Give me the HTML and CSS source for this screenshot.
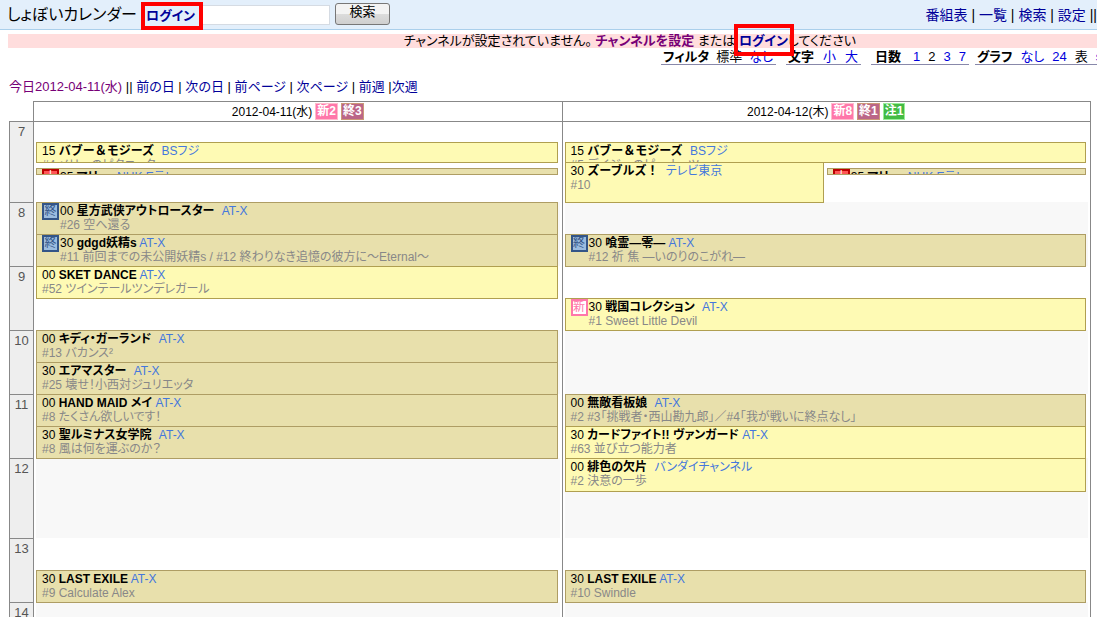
FILE: index.html
```html
<!DOCTYPE html>
<html lang="ja">
<head>
<meta charset="utf-8">
<title>しょぼいカレンダー</title>
<link rel="stylesheet" href="styles.css">
</head>
<body>
<header class="top">
  <h1 class="brand">しょぼいカレンダー</h1>
  <a class="login boxed" href="#">ログイン</a>
  <form class="search">
    <input class="search-text" type="text" aria-label="検索語">
    <button class="search-button" type="button">検索</button>
  </form>
  <nav class="menu"><a href="#">番組表</a> | <a href="#">一覧</a> | <a href="#">検索</a> | <a href="#">設定</a> ||</nav>
</header>
<p class="notice">チャンネルが設定されていません。 <a class="visited" href="#">チャンネルを設定</a> または <a class="login marked" href="#">ログイン</a>してください</p>
<div class="options">
  <div class="option"><b>フィルタ</b><span>標準</span><a href="#">なし</a></div>
  <div class="option size"><b>文字</b><a href="#">小</a><a href="#">大</a></div>
  <div class="option days"><b>日数</b><a href="#">1</a><span>2</span><a href="#">3</a><a href="#">7</a></div>
  <div class="option graph"><b>グラフ</b><a href="#">なし</a><a href="#">24</a><span>表</span><a href="#">s</a></div>
</div>
<nav class="pager"><a class="visited" href="#">今日2012-04-11(水)</a> || <a href="#">前の日</a> | <a href="#">次の日</a> | <a href="#">前ページ</a> | <a href="#">次ページ</a> | <a href="#">前週</a> |<a href="#">次週</a></nav>
<table class="schedule">
  <thead>
    <tr>
      <td class="corner"></td>
      <th class="day" scope="col"><div class="date">2012-04-11(水) <span class="badge new">新2</span><span class="badge end">終3</span></div></th>
      <th class="day" scope="col"><div class="date">2012-04-12(木) <span class="badge new">新8</span><span class="badge end">終1</span><span class="badge note">注1</span></div></th>
    </tr>
  </thead>
  <tbody>
    <tr class="first">
      <th class="hour" scope="row">7</th>
      <td class="cell"><div class="slots early">
        <article class="show q2"><div class="info"><p>15 <b class="wide">バブー＆モジーズ</b> <a href="#">BSフジ</a></p><p class="sub">#4 メリーのピクニック</p></div></article>
        <div class="pair q3"><article class="show past short"><span class="tag red">土</span><div class="info"><p>35 <b>マリー</b> <a href="#">NHK Eテレ</a></p></div></article></div>
      </div></td>
      <td class="cell"><div class="slots early">
        <article class="show q2"><div class="info"><p>15 <b class="wide">バブー＆モジーズ</b> <a href="#">BSフジ</a></p><p class="sub">#5 デイジーのピーナッツ</p></div></article>
        <div class="pair q3"><article class="show"><div class="info"><p>30 <b class="wide">ズーブルズ！</b> <a href="#">テレビ東京</a></p><p class="sub">#10</p></div></article><article class="show past short"><span class="tag red">土</span><div class="info"><p>35 <b>マリー</b> <a href="#">NHK Eテレ</a></p></div></article></div>
      </div></td>
    </tr>
    <tr class="even">
      <th class="hour" scope="row">8</th>
      <td class="cell"><div class="slots">
        <article class="show past"><span class="tag blue">終</span><div class="info"><p>00 <b>星方武侠アウトロースター</b> <a href="#">AT-X</a></p><p class="sub">#26 空へ還る</p></div></article>
        <article class="show past"><span class="tag blue">終</span><div class="info"><p>30 <b class="latin">gdgd妖精s</b> <a href="#">AT-X</a></p><p class="sub">#11 前回までの未公開妖精s / #12 終わりなき追憶の彼方に～Eternal～</p></div></article>
      </div></td>
      <td class="cell"><div class="slots">
        <article class="show past half"><span class="tag blue">終</span><div class="info"><p>30 <b class="latin">喰霊―零―</b> <a href="#">AT-X</a></p><p class="sub">#12 祈 焦 ―いのりのこがれ―</p></div></article>
      </div></td>
    </tr>
    <tr>
      <th class="hour" scope="row">9</th>
      <td class="cell"><div class="slots">
        <article class="show"><div class="info"><p>00 <b class="latin">SKET DANCE</b> <a href="#">AT-X</a></p><p class="sub">#52 ツインテールツンデレガール</p></div></article>
      </div></td>
      <td class="cell"><div class="slots">
        <article class="show half"><span class="tag pink">新</span><div class="info"><p>30 <b>戦国コレクション</b> <a href="#">AT-X</a></p><p class="sub">#1 Sweet Little Devil</p></div></article>
      </div></td>
    </tr>
    <tr class="even">
      <th class="hour" scope="row">10</th>
      <td class="cell"><div class="slots">
        <article class="show past"><div class="info"><p>00 <b>キディ・ガーランド</b> <a href="#">AT-X</a></p><p class="sub">#13 バカンス²</p></div></article>
        <article class="show past"><div class="info"><p>30 <b>エアマスター</b> <a href="#">AT-X</a></p><p class="sub wide">#25 壊せ！小西対ジュリエッタ</p></div></article>
      </div></td>
      <td class="cell"><div class="slots"></div></td>
    </tr>
    <tr>
      <th class="hour" scope="row">11</th>
      <td class="cell"><div class="slots">
        <article class="show past"><div class="info"><p>00 <b class="latin">HAND MAID メイ</b> <a href="#">AT-X</a></p><p class="sub">#8 たくさん欲しいです！</p></div></article>
        <article class="show past"><div class="info"><p>30 <b>聖ルミナス女学院</b> <a href="#">AT-X</a></p><p class="sub">#8 風は何を運ぶのか？</p></div></article>
      </div></td>
      <td class="cell"><div class="slots">
        <article class="show past"><div class="info"><p>00 <b>無敵看板娘</b> <a href="#">AT-X</a></p><p class="sub">#2 #3「挑戦者・西山勘九郎」／#4「我が戦いに終点なし」</p></div></article>
        <article class="show"><div class="info"><p>30 <b class="latin">カードファイト!! ヴァンガード</b> <a href="#">AT-X</a></p><p class="sub">#63 並び立つ能力者</p></div></article>
      </div></td>
    </tr>
    <tr class="even">
      <th class="hour" scope="row">12</th>
      <td class="cell"><div class="slots long"></div></td>
      <td class="cell"><div class="slots long">
        <article class="show"><div class="info"><p>00 <b>緋色の欠片</b> <a href="#">バンダイチャンネル</a></p><p class="sub">#2 決意の一歩</p></div></article>
      </div></td>
    </tr>
    <tr>
      <th class="hour" scope="row">13</th>
      <td class="cell"><div class="slots">
        <article class="show past half"><div class="info"><p>30 <b class="latin">LAST EXILE</b> <a href="#">AT-X</a></p><p class="sub">#9 Calculate Alex</p></div></article>
      </div></td>
      <td class="cell"><div class="slots">
        <article class="show past half"><div class="info"><p>30 <b class="latin">LAST EXILE</b> <a href="#">AT-X</a></p><p class="sub">#10 Swindle</p></div></article>
      </div></td>
    </tr>
    <tr class="even">
      <th class="hour" scope="row">14</th>
      <td class="cell"><div class="slots"></div></td>
      <td class="cell"><div class="slots"></div></td>
    </tr>
  </tbody>
</table>
</body>
</html>
```

FILE: styles.css
```css
* { box-sizing: border-box; }

body {
  margin: 0;
  height: 100vh;
  overflow: hidden;
  background: #fff;
  color: #000;
  font-family: "Liberation Sans", "Noto Sans CJK JP", sans-serif;
  font-size: 13px;
  line-height: 14px;
  font-feature-settings: "palt";
}

p { margin: 0; }
a { color: #009; text-decoration: none; }
a.visited { color: #707; }

.top {
  display: flex;
  align-items: center;
  height: 30px;
  padding-left: 7px;
  background: #e3effb;
  border-bottom: 1px solid #aacfeb;
  white-space: nowrap;
}
.brand {
  width: 134px;
  margin: 0;
  font-size: 16px;
  font-weight: normal;
}
.login { font-weight: bold; }
.boxed {
  width: 62px;
  height: 28px;
  margin-top: 2px;
  padding-left: 1px;
  border: 4px solid #f00;
  line-height: 20px;
}
.search { display: flex; align-items: center; gap: 5px; }
.search-text {
  width: 127px;
  height: 20px;
  border: 1px solid #d5dbe3;
  border-left: 0;
  background: #fff;
}
.search-button {
  width: 55px;
  height: 22px;
  margin-bottom: 2px;
  padding: 0 0 4px;
  border: 1px solid #777;
  border-radius: 3px;
  background: linear-gradient(#f3f3f3 50%, #dcdcdc 50%, #cfcfcf);
  color: #000;
  font: inherit;
}
.menu { margin-left: auto; font-size: 14px; }

.notice {
  height: 14px;
  margin: 4px 0 0 8px;
  padding-right: 241px;
  background: #fdd;
  text-align: right;
  white-space: nowrap;
}
.notice .visited { font-weight: bold; }
.marked { position: relative; }
.marked::after {
  content: "";
  position: absolute;
  inset: -9px -6px -8px -5px;
  border: 4px solid #f00;
}

.options {
  display: flex;
  gap: 10px;
  padding: 2px 0 0 661px;
  overflow: hidden;
  white-space: nowrap;
}
.option {
  display: flex;
  flex: none;
  gap: 7px;
  height: 15px;
  padding: 0 3px 0 2px;
  border-bottom: 1px solid #88a;
}
.option a { color: #00d; }
.option.size { gap: 9px; }
.option.days { gap: 8px; padding-left: 4px; }
.option.days b { margin-right: 4px; }
.option.graph { gap: 8px; margin-left: -4px; }

.pager { padding: 15px 9px 7px; }

.schedule {
  width: calc(100% - 15px);
  margin-left: 9px;
  border-spacing: 0;
  table-layout: fixed;
  border-right: 1px solid #888;
  font-size: 12px;
}
.corner { width: 24px; padding: 0; border-bottom: 1px solid #888; }
.day {
  padding: 0;
  border: solid #888;
  border-width: 1px 0 1px 1px;
  font-weight: normal;
}
.date {
  display: flex;
  justify-content: center;
  align-items: center;
  gap: 3px;
  height: 19px;
}
.badge {
  height: 17px;
  padding: 0 1px;
  border: 1px solid;
  color: #fff;
  font-weight: bold;
}
.badge.new { background: #f7a; border-color: #fbc; }
.badge.end { background: #b68; border-color: #c97; }
.badge.note { background: #4b4; border-color: #9e9; }

.hour {
  padding: 3px 0 0;
  border: solid #888;
  border-width: 1px 0 0 1px;
  background: #eee;
  color: #555;
  font-size: 13px;
  font-weight: normal;
  vertical-align: top;
}
.first .hour { border-top: 0; }
.cell {
  padding: 0 2px;
  border-left: 1px solid #888;
  vertical-align: top;
}

.slots {
  display: grid;
  grid-template-rows: 32px 32px;
  padding-right: 2px;
}
.slots.early { grid-template-rows: 20px 20px 40px; }
.slots.long { grid-template-rows: 32px 48px; }
.even .slots { background: #f8f8f8; }
.half { grid-row: 2; }
.q2 { grid-row: 2; }
.q3 { grid-row: 3; }
.pair { display: flex; gap: 3px; margin-bottom: -1px; }
.pair .show { flex: 1; margin-bottom: 0; }

.show {
  z-index: 1;
  display: flex;
  gap: 1px;
  min-height: 0;
  margin-bottom: -1px;
  padding-left: 5px;
  border: 1px solid #b09f50;
  background: #fefab4;
  overflow: hidden;
  white-space: nowrap;
}
.long .show { margin-bottom: -2px; }
.past { background: #e8e0ac; border-color: #ae9d64; }
.show.short { height: 7px; margin-top: 6px; }
.info { padding-top: 1px; }
.info b { margin-right: 4px; }
.info b.latin { margin-right: 0; }
.info b.wide { font-feature-settings: normal; }
.show a { color: #47d; }
.sub { color: #888; }
.tag {
  flex: none;
  width: 17px;
  height: 17px;
  border: 2px solid;
  line-height: 13px;
  text-align: center;
}
.tag.blue { background: #9bbcdf; border-color: #358; color: #358; }
.tag.pink { background: #fff; border-color: #f7a; color: #f7a; }
.tag.red { background: #f55; border-color: #b00; color: #fff; }
```
